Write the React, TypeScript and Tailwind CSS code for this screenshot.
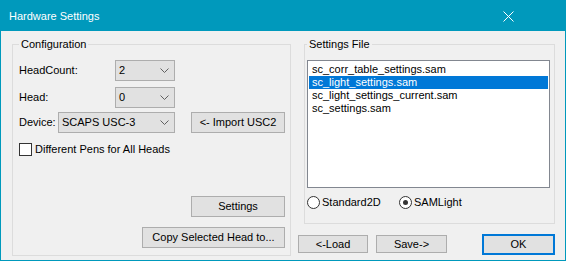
import React from 'react';

const files = [
    'sc_corr_table_settings.sam',
    'sc_light_settings.sam',
    'sc_light_settings_current.sam',
    'sc_settings.sam',
];

function Chevron() {
    return (
        <svg width="9" height="5" viewBox="0 0 9 5" className="shrink-0">
            <path d="M0.5 0.5 L4.5 4.5 L8.5 0.5" fill="none" stroke="#606060" strokeWidth="1" />
        </svg>
    );
}

function Combo({ value, width }: { value: string; width: string }) {
    return (
        <div
            className={`${width} h-[21px] bg-[#e1e1e1] border border-[#adadad] flex items-center justify-between pl-[3px] pr-[5px]`}
        >
            <span>{value}</span>
            <Chevron />
        </div>
    );
}

function Button({ label, className }: { label: string; className: string }) {
    return (
        <div
            className={`${className} bg-[#e1e1e1] border border-[#adadad] flex items-center justify-center`}
        >
            {label}
        </div>
    );
}

function Radio({ checked }: { checked?: boolean }) {
    return (
        <div className="w-[13px] h-[13px] rounded-full border border-[#333333] bg-white flex items-center justify-center shrink-0">
            {checked && <div className="w-[5px] h-[5px] rounded-full bg-[#333333]" />}
        </div>
    );
}

export default function App() {
    return (
        <div className="w-[566px] h-[261px] bg-[#0099bc] flex flex-col font-['Liberation_Sans',Arial,sans-serif] text-[11px] leading-[13px] text-black">
            {/* Title bar */}
            <div className="h-[31px] shrink-0 flex items-center justify-between pl-[9px] pt-[1px] text-white">
                <span className="text-[11px]">Hardware Settings</span>
                <svg width="11" height="11" viewBox="0 0 11 11" className="mr-[52px]">
                    <path d="M0.5 0.5 L10.5 10.5 M10.5 0.5 L0.5 10.5" stroke="white" strokeWidth="1" />
                </svg>
            </div>

            {/* Body */}
            <div className="flex-1 mx-[1px] mb-[1px] bg-[#f0f0f0] flex pl-[11px] pt-[7px]">
                {/* Configuration */}
                <fieldset className="w-[279px] h-[218px] border border-[#dcdcdc] pl-[6px] pr-[5px]">
                    <legend className="px-[2px] leading-[13px]">Configuration</legend>
                    <div className="flex flex-col pt-[9px]">
                        <div className="flex items-center h-[21px]">
                            <span className="w-[96px]">HeadCount:</span>
                            <Combo value="2" width="w-[60px]" />
                        </div>
                        <div className="flex items-center h-[21px] mt-[6px]">
                            <span className="w-[96px]">Head:</span>
                            <Combo value="0" width="w-[60px]" />
                        </div>
                        <div className="flex items-center h-[21px] mt-[4px]">
                            <span className="w-[39px]">Device:</span>
                            <Combo value="SCAPS USC-3" width="w-[117px]" />
                            <Button label="<- Import USC2" className="ml-[16px] w-[94px] h-[21px]" />
                        </div>
                        <div className="flex items-center mt-[10px]">
                            <div className="w-[13px] h-[13px] border border-[#333333] bg-white" />
                            <span className="ml-[3px]">Different Pens for All Heads</span>
                        </div>
                        <Button label="Settings" className="self-end mt-[40px] w-[94px] h-[21px]" />
                        <Button label="Copy Selected Head to..." className="self-end mt-[10px] w-[143px] h-[21px]" />
                    </div>
                </fieldset>

                {/* Right column */}
                <div className="ml-[7px] w-[257px] flex flex-col">
                    <fieldset className="ml-[6px] w-[251px] h-[186px] border border-[#dcdcdc] pl-[2px] pr-[4px]">
                        <legend className="px-[2px] leading-[13px]">Settings File</legend>
                        <div className="flex flex-col pt-[9px]">
                            <div className="h-[128px] bg-white border border-[#828790] px-[1px] pt-[2px]">
                                {files.map((f, i) => (
                                    <div
                                        key={f}
                                        className={
                                            i === 1
                                                ? 'h-[13px] pl-[3px] bg-[#0078d7] text-white'
                                                : 'h-[13px] pl-[3px]'
                                        }
                                    >
                                        {f}
                                    </div>
                                ))}
                            </div>
                            <div className="flex items-center mt-[8px]">
                                <div className="w-[92px] flex items-center">
                                    <Radio />
                                    <span className="ml-[2px]">Standard2D</span>
                                </div>
                                <Radio checked />
                                <span className="ml-[2px]">SAMLight</span>
                            </div>
                        </div>
                    </fieldset>
                    <div className="flex items-start mt-[10px]">
                        <Button label="<-Load" className="mt-[1px] w-[70px] h-[18px]" />
                        <Button label="Save->" className="mt-[1px] ml-[8px] w-[71px] h-[18px]" />
                        <div className="ml-[35px] w-[73px] h-[21px] bg-[#e1e1e1] border-2 border-[#0078d7] flex items-center justify-center">
                            OK
                        </div>
                    </div>
                </div>
            </div>
        </div>
    );
}
